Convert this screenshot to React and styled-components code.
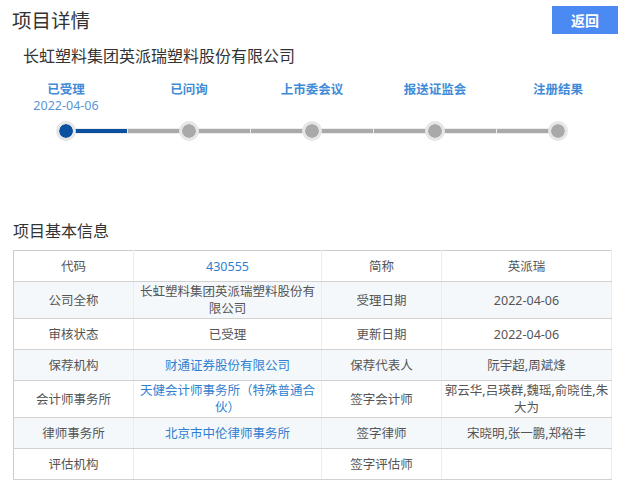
import React from "react";
import styled, { createGlobalStyle } from "styled-components";

const Global = createGlobalStyle`
  html, body { margin: 0; padding: 0; background: #fff; }
  body { font-family: "Noto Sans", "Noto Sans CJK SC", sans-serif; color: #333; }
  * { box-sizing: border-box; }
`;

const Page = styled.div`
  width: 623px;
  display: flex;
  flex-direction: column;
`;

const Header = styled.div`
  display: flex;
  align-items: center;
  justify-content: space-between;
  padding: 6px 5px 0 12px;
  height: 34px;
`;

const Title = styled.h1`
  margin: 0;
  font-size: 19.5px;
  font-weight: 400;
  color: #333;
  line-height: 28px;
  font-family: "Noto Sans CJK SC", sans-serif;
`;

const BackButton = styled.button`
  width: 66px;
  height: 28px;
  border: none;
  background: #4b8af3;
  color: #fff;
  font-size: 14px;
  font-weight: 700;
  font-family: "Noto Sans CJK SC", sans-serif;
  padding: 0;
  cursor: pointer;
`;

const Company = styled.div`
  margin: 10px 0 0 23px;
  font-size: 16px;
  line-height: 22px;
  color: #333;
  font-family: "Noto Sans CJK SC", sans-serif;
`;

const Stepper = styled.div`
  display: grid;
  grid-template-columns: repeat(5, 1fr);
  margin: 15px 3.5px 0 4.5px;
`;

const Step = styled.div`
  display: flex;
  flex-direction: column;
  align-items: center;
`;

const StepLabel = styled.div`
  font-size: 12.5px;
  line-height: 15px;
  font-weight: 700;
  color: #3f8bd8;
  font-family: "Noto Sans CJK SC", sans-serif;
`;

const StepDate = styled.div`
  margin-top: 2px;
  font-size: 12.5px;
  line-height: 15px;
  height: 15px;
  color: #5b95d6;
`;

const DotRow = styled.div`
  position: relative;
  width: 100%;
  height: 20px;
  margin-top: 8px;
  display: flex;
  justify-content: center;
  align-items: center;

  &::before,
  &::after {
    content: "";
    position: absolute;
    top: 8px;
    height: 4px;
    width: 50%;
    background: #aaaaaa;
    box-shadow: 0 0 0 1px #ececec;
  }
  &::before {
    left: 0;
    display: ${(p) => (p.$first ? "none" : "block")};
    background: ${(p) => (p.$leftDone ? "#0b4f9f" : "#aaaaaa")};
  }
  &::after {
    right: 0;
    display: ${(p) => (p.$last ? "none" : "block")};
    background: ${(p) => (p.$rightDone ? "#0b4f9f" : "#aaaaaa")};
  }
`;

const Dot = styled.span`
  position: relative;
  z-index: 1;
  width: 20px;
  height: 20px;
  border-radius: 50%;
  border: 3px solid #e6e6e6;
  background: ${(p) => (p.$active ? "#0b4f9f" : "#a9a9a9")};
  background-clip: padding-box;
`;

const SectionTitle = styled.h2`
  margin: 78px 0 9px 13px;
  font-size: 16px;
  font-weight: 400;
  line-height: 22px;
  color: #333;
  font-family: "Noto Sans CJK SC", sans-serif;
`;

const Table = styled.table`
  margin-left: 13px;
  width: 598px;
  border-collapse: collapse;
  table-layout: fixed;
  border: 1px solid #cccccc;
  font-size: 12.5px;
  font-family: "Noto Sans", "Noto Sans CJK SC", sans-serif;
`;

const Row = styled.tr`
  background: ${(p) => (p.$alt ? "#f4f8fb" : "#ffffff")};
`;

const Cell = styled.td`
  height: 31px;
  padding: 1px 2px;
  line-height: 17px;
  text-align: center;
  vertical-align: middle;
  color: ${(p) => (p.$link ? "#2f7fd0" : "#555")};
  border-bottom: 1px solid #d2d2d2;
  border-right: 1px solid #ececec;
  word-break: break-all;
`;

const steps = [
  { label: "已受理", date: "2022-04-06" },
  { label: "已问询" },
  { label: "上市委会议" },
  { label: "报送证监会" },
  { label: "注册结果" },
];

const rows = [
  ["代码", { v: "430555", link: true }, "简称", { v: "英派瑞" }],
  ["公司全称", { v: "长虹塑料集团英派瑞塑料股份有限公司" }, "受理日期", { v: "2022-04-06" }],
  ["审核状态", { v: "已受理" }, "更新日期", { v: "2022-04-06" }],
  ["保荐机构", { v: "财通证券股份有限公司", link: true }, "保荐代表人", { v: "阮宇超,周斌烽" }],
  ["会计师事务所", { v: "天健会计师事务所（特殊普通合伙）", link: true }, "签字会计师", { v: "郭云华,吕瑛群,魏瑶,俞晓佳,朱大为" }],
  ["律师事务所", { v: "北京市中伦律师事务所", link: true }, "签字律师", { v: "宋晓明,张一鹏,郑裕丰" }],
  ["评估机构", { v: "" }, "签字评估师", { v: "" }],
];

export default function App() {
  return (
    <Page>
      <Global />
      <Header>
        <Title>项目详情</Title>
        <BackButton>返回</BackButton>
      </Header>
      <Company>长虹塑料集团英派瑞塑料股份有限公司</Company>
      <Stepper>
        {steps.map((s, i) => (
          <Step key={s.label}>
            <StepLabel>{s.label}</StepLabel>
            <StepDate>{s.date || ""}</StepDate>
            <DotRow
              $first={i === 0}
              $last={i === steps.length - 1}
              $rightDone={i === 0}
            >
              <Dot $active={i === 0} />
            </DotRow>
          </Step>
        ))}
      </Stepper>
      <SectionTitle>项目基本信息</SectionTitle>
      <Table>
        <colgroup>
          <col style={{ width: 120 }} />
          <col style={{ width: 188 }} />
          <col style={{ width: 120 }} />
          <col style={{ width: 170 }} />
        </colgroup>
        <tbody>
          {rows.map((r, i) => (
            <Row key={r[0]} $alt={i % 2 === 1}>
              <Cell>{r[0]}</Cell>
              <Cell $link={r[1].link}>{r[1].v}</Cell>
              <Cell>{r[2]}</Cell>
              <Cell $link={r[3].link}>{r[3].v}</Cell>
            </Row>
          ))}
        </tbody>
      </Table>
    </Page>
  );
}
